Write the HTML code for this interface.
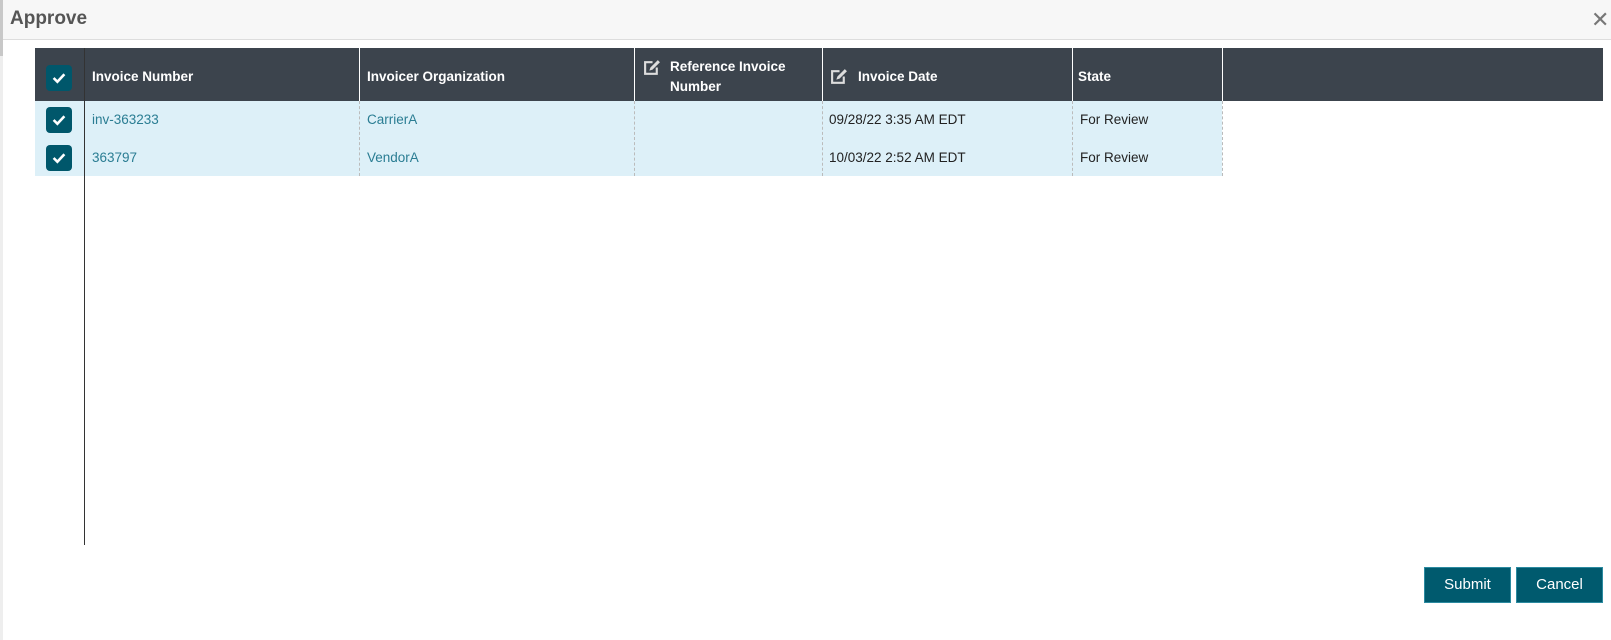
<!DOCTYPE html>
<html><head><style>
body{margin:0;width:1611px;height:640px;background:#fff;font-family:"Liberation Sans",sans-serif;position:relative;overflow:hidden}
.hdr{position:absolute;left:0;top:0;width:1611px;height:39px;background:#f7f7f7;border-bottom:1px solid #ddd}
.hdr .t{position:absolute;left:10px;top:8px;font-size:19px;font-weight:bold;color:#555}
.x{position:absolute;left:1591px;top:7px;font-size:22px;color:#777}
.strip{position:absolute;left:0;top:0;width:3px;height:56px;background:#c8c8c8}
.strip2{position:absolute;left:0;top:56px;width:3px;height:584px;background:#eee}
.th{position:absolute;top:48px;height:53px;background:#3c444d}
.row{position:absolute;left:35px;width:1187px;background:#ddf0f8}
.a{position:absolute;font-size:13.5px}
.h{color:#fff;font-weight:bold;font-size:13.5px;position:absolute}
.l{color:#2a7d93}
.d{color:#222}
.cb{position:absolute;left:46px;width:26px;height:26px;background:#00576b;border-radius:4px}
.cb svg{position:absolute;left:6px;top:7px}
.vw{position:absolute;top:48px;height:53px;width:1px;background:#fff}
.vd{position:absolute;top:101px;height:75px;border-left:1px dashed #bbb}
.btn{position:absolute;top:567px;height:36px;background:#005a6e;border:1px solid #2b8aa0;color:#fff;font-size:15px;text-align:center;line-height:34px;box-sizing:border-box}
</style></head><body>
<div class="hdr"><div class="t">Approve</div><div class="x">✕</div></div>
<div class="strip"></div><div class="strip2"></div>
<div class="th" style="left:35px;width:1568px"></div>
<div class="row" style="top:101px;height:37px"></div>
<div class="row" style="top:138px;height:38px"></div>
<div style="position:absolute;left:84px;top:48px;width:1px;height:497px;background:#333"></div>
<div class="vw" style="left:359px"></div><div class="vw" style="left:634px"></div><div class="vw" style="left:822px"></div><div class="vw" style="left:1072px"></div><div class="vw" style="left:1222px"></div>
<div class="vd" style="left:359px"></div><div class="vd" style="left:634px"></div><div class="vd" style="left:822px"></div><div class="vd" style="left:1072px"></div><div class="vd" style="left:1222px"></div>
<div class="cb" style="top:65px"><svg width="14" height="12" viewBox="0 0 13 11"><path d="M1.5 5.5l3.5 3.5 6.5-7" stroke="#fff" stroke-width="2.4" fill="none"/></svg></div>
<div class="cb" style="top:107px"><svg width="14" height="12" viewBox="0 0 13 11"><path d="M1.5 5.5l3.5 3.5 6.5-7" stroke="#fff" stroke-width="2.4" fill="none"/></svg></div>
<div class="cb" style="top:145px"><svg width="14" height="12" viewBox="0 0 13 11"><path d="M1.5 5.5l3.5 3.5 6.5-7" stroke="#fff" stroke-width="2.4" fill="none"/></svg></div>
<div class="h" style="left:92px;top:69px">Invoice Number</div>
<div class="h" style="left:367px;top:69px">Invoicer Organization</div>
<svg style="position:absolute;left:643px;top:59px" width="18" height="17" viewBox="0 0 17 16"><path d="M9 3H2v11h11V8" stroke="#ddd" stroke-width="2" fill="none"/><path d="M6 11l1-3 7-7 2 2-7 7z" fill="#ddd"/></svg>
<div class="h" style="left:670px;top:57px;line-height:20px">Reference Invoice<br>Number</div>
<svg style="position:absolute;left:830px;top:68px" width="18" height="17" viewBox="0 0 17 16"><path d="M9 3H2v11h11V8" stroke="#ddd" stroke-width="2" fill="none"/><path d="M6 11l1-3 7-7 2 2-7 7z" fill="#ddd"/></svg>
<div class="h" style="left:858px;top:69px">Invoice Date</div>
<div class="h" style="left:1078px;top:69px">State</div>
<div class="a l" style="left:92px;top:112px">inv-363233</div>
<div class="a l" style="left:367px;top:112px">CarrierA</div>
<div class="a d" style="left:829px;top:112px">09/28/22 3:35 AM EDT</div>
<div class="a d" style="left:1080px;top:112px">For Review</div>
<div class="a l" style="left:92px;top:150px">363797</div>
<div class="a l" style="left:367px;top:150px">VendorA</div>
<div class="a d" style="left:829px;top:150px">10/03/22 2:52 AM EDT</div>
<div class="a d" style="left:1080px;top:150px">For Review</div>
<div class="btn" style="left:1424px;width:87px">Submit</div>
<div class="btn" style="left:1516px;width:87px">Cancel</div>
</body></html>
